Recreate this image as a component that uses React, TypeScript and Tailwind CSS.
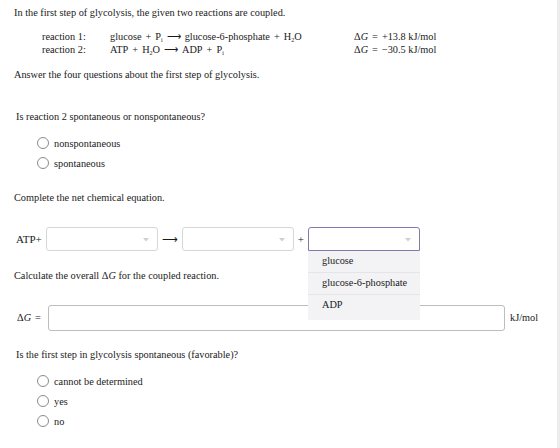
import React, { useState } from 'react';

const serif = { fontFamily: '"Liberation Serif", "Times New Roman", serif' };

// math-style operator with wider side spacing
const Op: React.FC<{ children: React.ReactNode }> = ({ children }) => <span className="mx-[4px]">{children}</span>;

const Radio: React.FC<{ label: string; checked?: boolean; onClick?: () => void }> = ({ label, checked, onClick }) => (
  <label className="flex items-center h-[20px] cursor-pointer" onClick={onClick}>
    <span className="w-[12px] h-[12px] rounded-full border border-[#8a8a8a] bg-white flex items-center justify-center">
      {checked && <span className="w-[6px] h-[6px] rounded-full bg-[#555]" />}
    </span>
    <span className="ml-[5px] leading-[13px]">{label}</span>
  </label>
);

const Caret = () => (
  <svg width="6" height="4" viewBox="0 0 6 4" className="absolute right-[8px] top-[10px]">
    <path d="M0 0 L6 0 L3 3.5 Z" fill="#d0d0d0" />
  </svg>
);

const SelectBox: React.FC<{ open?: boolean }> = ({ open }) => (
  <div
    className={
      open
        ? 'relative w-[112px] h-[24px] rounded-t-[3px] border border-[#8577b0] bg-white'
        : 'relative w-[112px] h-[24px] rounded-[3px] border border-[#d6d6d6] bg-white'
    }
  >
    <Caret />
  </div>
);

const options = ['glucose', 'glucose-6-phosphate', 'ADP'];

export default function App() {
  const [q1, setQ1] = useState<string | null>(null);
  const [q4, setQ4] = useState<string | null>(null);

  return (
    <div className="w-[560px] h-[448px] bg-white text-[10.3px] text-[#1a1a1a] flex overflow-hidden" style={serif}>
      <div className="flex-1 pl-[14px] pt-[6px]">
        <p className="leading-[13px]">In the first step of glycolysis, the given two reactions are coupled.</p>

        {/* reactions table */}
        <div className="mt-[11px] ml-[28px] grid grid-cols-[68px_244px_auto] leading-[13px]">
          <span>reaction 1:</span>
          <span>
            glucose<Op>+</Op>P<sub className="text-[6px]">i</sub>
            <Op>⟶</Op>glucose-6-phosphate<Op>+</Op>H<sub className="text-[6px]">2</sub>O
          </span>
          <span>
            Δ<i>G</i>
            <Op>=</Op>+13.8 kJ/mol
          </span>
          <span>reaction 2:</span>
          <span>
            ATP<Op>+</Op>H<sub className="text-[6px]">2</sub>O<Op>⟶</Op>ADP<Op>+</Op>P<sub className="text-[6px]">i</sub>
          </span>
          <span>
            Δ<i>G</i>
            <Op>=</Op>−30.5 kJ/mol
          </span>
        </div>

        <p className="mt-[12px] leading-[13px]">Answer the four questions about the first step of glycolysis.</p>

        <p className="mt-[29px] ml-[2px] leading-[13px]">Is reaction 2 spontaneous or nonspontaneous?</p>
        <div className="mt-[10px] ml-[23px]">
          <Radio label="nonspontaneous" checked={q1 === 'n'} onClick={() => setQ1('n')} />
          <Radio label="spontaneous" checked={q1 === 's'} onClick={() => setQ1('s')} />
        </div>

        <p className="mt-[18px] leading-[13px]">Complete the net chemical equation.</p>

        {/* net equation with dropdowns */}
        <div className="mt-[23px] ml-[2px] flex items-center">
          <span className="mr-[4px] text-[11px]">ATP+</span>
          <SelectBox />
          <span className="mx-[4px] text-[11px]">⟶</span>
          <SelectBox />
          <span className="mx-[4px] text-[11px]">+</span>
          <div className="relative">
            <SelectBox open />
            <ul className="absolute left-0 top-[24px] w-[112px] bg-[#f3f3f6] z-10 leading-[13px]">
              {options.map((o, i) => (
                <li
                  key={o}
                  className={
                    i < options.length - 1
                      ? 'pl-[14px] pt-[3px] pb-[5px] border-b border-[#e4e4ea]'
                      : 'pl-[14px] pt-[3px] pb-[9px]'
                  }
                >
                  {o}
                </li>
              ))}
            </ul>
          </div>
        </div>

        <p className="mt-[18px] leading-[13px]">
          Calculate the overall Δ<i>G</i> for the coupled reaction.
        </p>

        <div className="mt-[23px] ml-[3px] flex items-center">
          <span className="w-[31px]">
            Δ<i>G</i>
            <Op>=</Op>
          </span>
          <input className="w-[457px] h-[26px] rounded-[3px] border border-[#bdbdbd] outline-none px-[6px]" />
          <span className="ml-[5px]">kJ/mol</span>
        </div>

        <p className="mt-[17px] ml-[2px] leading-[13px]">Is the first step in glycolysis spontaneous (favorable)?</p>
        <div className="mt-[10px] ml-[23px]">
          <Radio label="cannot be determined" checked={q4 === 'c'} onClick={() => setQ4('c')} />
          <Radio label="yes" checked={q4 === 'y'} onClick={() => setQ4('y')} />
          <Radio label="no" checked={q4 === 'n'} onClick={() => setQ4('n')} />
        </div>
      </div>
      <div className="w-[3px] bg-[#ececec]" />
    </div>
  );
}
